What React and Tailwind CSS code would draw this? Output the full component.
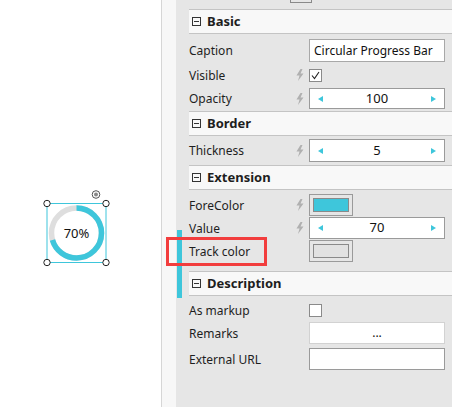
import React from "react";

const FONT = { fontFamily: '"Noto Sans", "Open Sans", sans-serif' };

const Bolt = () => (
  <svg width="8" height="12" viewBox="0 0 8 12" className="shrink-0">
    <path d="M4.5 0 L0.5 6.5 L3.5 6.5 L2 12 L7.5 4.5 L4.5 4.5 L6.5 0 Z" fill="#b0b0b0" />
  </svg>
);

const Header = ({ title, className = "" }) => (
  <div className={`flex items-center h-[25px] bg-[#f8f8f8] border-y border-[#c4c4c4] pl-[3px] ${className}`}>
    <div className="w-[9px] h-[9px] border border-[#333] flex items-center justify-center">
      <div className="w-[5px] h-px bg-[#333]" />
    </div>
    <span className="ml-[6px] text-[13px] font-bold text-[#1e1e1e]">{title}</span>
  </div>
);

const Row = ({ label, bolt, className = "", children }) => (
  <div className={`flex items-center pr-[7px] ${className}`}>
    <span className="flex-1 text-[12px] text-[#1e1e1e] leading-none pt-px">{label}</span>
    <div className="w-[8px] mr-[5px] flex justify-center">{bolt && <Bolt />}</div>
    <div className="w-[136px] h-full flex items-center">{children}</div>
  </div>
);

const Spinner = ({ value }) => (
  <div className="w-full h-full bg-white border border-[#9a9a9a] flex items-center justify-between px-[8px]">
    <span className="w-0 h-0 border-y-[3px] border-y-transparent border-r-[5px] border-r-[#3ec6db]" />
    <span className="text-[13px] text-[#111]">{value}</span>
    <span className="w-0 h-0 border-y-[3px] border-y-transparent border-l-[5px] border-l-[#3ec6db]" />
  </div>
);

const Swatch = ({ color }) => (
  <div className="w-[44px] h-full border border-[#9a9a9a] p-[3px]">
    <div className="w-full h-full border border-[#8a8a8a]" style={{ background: color }} />
  </div>
);

const Check = ({ checked }) => (
  <div className="w-[13px] h-[13px] bg-white border border-[#8a8a8a] flex items-center justify-center">
    {checked && (
      <svg width="9" height="9" viewBox="0 0 9 9">
        <path d="M1 4.5 L3.5 7.5 L8 1" stroke="#222" strokeWidth="1.1" fill="none" />
      </svg>
    )}
  </div>
);

const Ring = () => {
  const r = 25;
  const c = 2 * Math.PI * r;
  return (
    <svg width="76" height="80" viewBox="0 0 76 80" className="absolute left-[38px] top-[189px]">
      <g transform="translate(38.5 44)">
        <circle r={r} fill="none" stroke="#dedede" strokeWidth="5.5" />
        <circle
          r={r}
          fill="none"
          stroke="#3ec6db"
          strokeWidth="5.5"
          strokeDasharray={`${c * 0.7} ${c}`}
          transform="rotate(-90)"
        />
        <rect x="-29.5" y="-29.5" width="59" height="59" fill="none" stroke="#3ec6db" strokeWidth="1" />
        {[[-29.5, -29.5], [29.5, -29.5], [-29.5, 29.5], [29.5, 29.5]].map(([x, y], i) => (
          <circle key={i} cx={x} cy={y} r="3.2" fill="#fff" stroke="#222" strokeWidth="1" />
        ))}
        <circle cx="19.5" cy="-38.5" r="3.8" fill="#fff" stroke="#555" strokeWidth="1" />
        <circle cx="19.5" cy="-38.5" r="2" fill="#888" />
      </g>
    </svg>
  );
};

export default function App() {
  return (
    <div className="relative flex w-[452px] h-[407px] overflow-hidden bg-white" style={FONT}>
      {/* canvas */}
      <div className="relative w-[162px] h-full bg-white border-r border-[#d6d6d6]">
        <Ring />
        <div className="absolute left-[47px] top-[204px] w-[59px] h-[59px] flex items-center justify-center text-[13px] text-[#111]">
          70%
        </div>
      </div>

      {/* gutter */}
      <div className="w-[14px] h-full bg-[#f7f7f7]" />

      {/* property panel */}
      <div className="flex-1 h-full bg-[#e6e6e6] pl-[13px] flex flex-col">
        <div className="ml-[101px] w-[22px] h-[3px] border-x border-b border-[#8a8a8a]" />

        <Header title="Basic" className="mt-[6px]" />
        <Row label="Caption" className="mt-[5px] h-[23px]">
          <div className="w-full h-full bg-white border border-[#a8a8a8] flex items-center px-[4px] text-[12px] text-[#111] whitespace-nowrap">
            Circular Progress Bar
          </div>
        </Row>
        <Row label="Visible" bolt className="h-[26px]">
          <Check checked />
        </Row>
        <Row label="Opacity" bolt className="h-[21px]">
          <Spinner value="100" />
        </Row>

        <Header title="Border" className="mt-[2px]" />
        <Row label="Thickness" bolt className="mt-[3px] h-[23px]">
          <Spinner value="5" />
        </Row>

        <Header title="Extension" className="mt-[3px]" />
        <Row label="ForeColor" bolt className="mt-[4px] h-[22px]">
          <Swatch color="#3ec6db" />
        </Row>
        <Row label="Value" bolt className="mt-[1px] h-[22px]">
          <Spinner value="70" />
        </Row>
        <Row label="Track color" className="mt-[1px] h-[22px]">
          <Swatch color="#e2e2e2" />
        </Row>

        <Header title="Description" className="mt-[9px]" />
        <Row label="As markup" className="mt-[8px] h-[13px]">
          <Check />
        </Row>
        <Row label="Remarks" className="mt-[5px] h-[22px]">
          <div className="w-full h-full bg-white border border-[#d2d2d2] flex items-center justify-center text-[12px] text-[#111]">
            ...
          </div>
        </Row>
        <Row label="External URL" className="mt-[4px] h-[22px]">
          <div className="w-full h-full bg-white border border-[#9a9a9a]" />
        </Row>
      </div>

      {/* selection indicator + highlight */}
      <div className="absolute left-[177px] top-[230px] w-[5px] h-[68px] bg-[#3ec6db]" />
      <div className="absolute left-[166px] top-[237px] w-[101px] h-[29px] border-[3px] border-[#f23d3d]" />
    </div>
  );
}
